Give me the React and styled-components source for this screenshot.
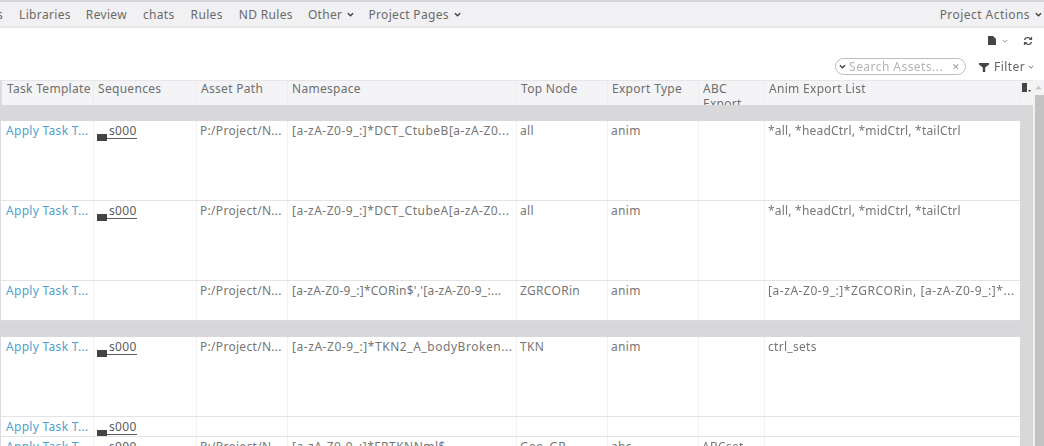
import React from "react";
import styled, { createGlobalStyle } from "styled-components";

const Global = createGlobalStyle`
  html, body { margin: 0; padding: 0; background: #fff; }
  body { font-family: "Noto Sans", "Open Sans", sans-serif; font-size: 12px; color: #666; }
`;

const Page = styled.div`
  width: 1044px;
  height: 446px;
  overflow: hidden;
  display: flex;
  flex-direction: column;
  filter: blur(0.4px);
`;

const Nav = styled.nav`
  height: 28px;
  flex: none;
  box-sizing: border-box;
  border-top: 2px solid #d6d6d8;
  border-bottom: 2px solid #e6e6e8;
  background: #f1f1f3;
  display: flex;
  align-items: center;
  overflow: hidden;
`;

const NavItem = styled.span`
  font-size: 12px;
  color: #6a6a6a;
  white-space: nowrap;
  margin-left: ${(p) => p.$gap}px;
  letter-spacing: 0.33px;
  display: inline-flex;
  align-items: center;
  gap: 5px;
`;

const NavEnd = styled(NavItem)`
  margin-right: 2px;
  letter-spacing: 0.45px;
`;

const NavSpacer = styled.span`
  flex: 1;
`;

const Chevron = ({ size = 7, color = "#444", w = 1.6 }) => (
  <svg width={size} height={size} viewBox="0 0 8 8" fill="none">
    <path d="M1 2.5 4 5.5 7 2.5" stroke={color} strokeWidth={w} />
  </svg>
);

const IconRow = styled.div`
  height: 25px;
  flex: none;
  display: flex;
  justify-content: flex-end;
  align-items: center;
  gap: 15px;
  padding: 0 11px 0 0;
  box-sizing: border-box;
`;

const DocGroup = styled.span`
  display: inline-flex;
  align-items: center;
  gap: 6px;
`;

const FilterRow = styled.div`
  height: 27px;
  flex: none;
  display: flex;
  justify-content: flex-end;
  align-items: center;
  padding: 0 10px 0 0;
  box-sizing: border-box;
`;

const Search = styled.div`
  width: 131px;
  height: 17px;
  box-sizing: border-box;
  border: 1px solid #bcbcbc;
  border-radius: 9px;
  display: flex;
  align-items: center;
  padding: 0 5px 0 3px;
  gap: 3px;
  margin-right: 13px;
`;

const SearchText = styled.span`
  flex: 1;
  color: #b4b4b4;
  font-size: 12px;
  letter-spacing: 0.45px;
  white-space: nowrap;
`;

const Clear = styled.span`
  color: #999;
  font-size: 9px;
`;

const Filter = styled.span`
  display: inline-flex;
  align-items: center;
  gap: 5px;
  color: #666;
  font-size: 12px;
  letter-spacing: 0.4px;
`;

const FilterChevron = styled.span`
  display: inline-flex;
  margin-left: -2px;
`;

const Body = styled.div`
  flex: 1;
  min-height: 0;
  display: flex;
  overflow: hidden;
`;

const TableWrap = styled.div`
  width: 1033px;
  flex: none;
  background: #d8d8da;
  overflow: hidden;
`;

const Cols = "103px 91px 229px 91px 91px 66px 256px";

const HeaderRow = styled.div`
  height: 25px;
  display: grid;
  grid-template-columns: 91px ${Cols} 13px;
  background: #f4f4f6;
  border-top: 1px solid #e6e6e8;
  box-sizing: border-box;
  border-left: 2px solid #dcdcde;
  overflow: hidden;
`;

const HeaderCell = styled.div`
  box-sizing: border-box;
  padding-left: ${(p) => p.$pad ?? 4}px;
  border-left: ${(p) => (p.$first ? "none" : "1px solid #ececee")};
  font-size: 12px;
  line-height: 15px;
  color: #6e6e6e;
  letter-spacing: 0.3px;
  white-space: ${(p) => (p.$wrap ? "normal" : "nowrap")};
  overflow: hidden;
`;

const Band = styled.div`
  height: 16px;
  background: #d8d8da;
`;

const Row = styled.div`
  width: 1020px;
  height: ${(p) => p.$h}px;
  box-sizing: border-box;
  display: grid;
  grid-template-columns: 92px ${Cols};
  background: #fff;
  border-left: 1px solid #dcdcde;
  border-bottom: 1px solid ${(p) => (p.$last ? "#dcdcde" : "#e4e4e6")};
  overflow: hidden;
`;

const Cell = styled.div`
  box-sizing: border-box;
  padding: ${(p) => p.$top ?? 2}px 0 0 ${(p) => p.$pad ?? 3}px;
  border-left: ${(p) => (p.$first ? "none" : "1px solid #f2f2f3")};
  font-size: 12px;
  line-height: 16px;
  color: #767676;
  letter-spacing: ${(p) => p.$ls ?? 0.3}px;
  white-space: nowrap;
  overflow: hidden;
`;

const TaskLink = styled.span`
  color: #4f9fd0;
`;

const SeqLink = styled.span`
  display: inline-flex;
  align-items: flex-end;
  line-height: 14px;
`;

const SeqText = styled.span`
  color: #5c5c5c;
  border-bottom: 1px solid #5c5c5c;
  padding-left: 2px;
`;

const SeqBox = styled.span`
  display: inline-block;
  width: 10px;
  height: 7px;
  margin-bottom: -2px;
  background: #444;
`;

const Scrollbar = styled.div`
  width: 11px;
  flex: none;
  background: #f0f0f0;
  display: flex;
  flex-direction: column;
  align-items: flex-end;
`;

const ScrollUp = styled.div`
  height: 15px;
  width: 100%;
  display: flex;
  justify-content: center;
  align-items: center;
  background: #f4f4f6;
`;

const ScrollThumb = styled.div`
  flex: 1;
  width: 9px;
  background: #c2c2c2;
`;

const head = [
  "Task Template",
  "Sequences",
  "Asset Path",
  "Namespace",
  "Top Node",
  "Export Type",
  "ABC Export",
  "Anim Export List",
];

const rows = [
  { h: 80, seq: true, path: "P:/Project/N...", ns: "[a-zA-Z0-9_:]*DCT_CtubeB[a-zA-Z0...", nsLs: 0.5, top: "all", type: "anim", abc: "", list: "*all, *headCtrl, *midCtrl, *tailCtrl", listLs: 0.2 },
  { h: 80, seq: true, path: "P:/Project/N...", ns: "[a-zA-Z0-9_:]*DCT_CtubeA[a-zA-Z0...", nsLs: 0.5, top: "all", type: "anim", abc: "", list: "*all, *headCtrl, *midCtrl, *tailCtrl", listLs: 0.2 },
  { h: 40, last: true, seq: false, path: "P:/Project/N...", ns: "[a-zA-Z0-9_:]*CORin$','[a-zA-Z0-9_:...", nsLs: 0.25, top: "ZGRCORin", type: "anim", abc: "", list: "[a-zA-Z0-9_:]*ZGRCORin, [a-zA-Z0-9_:]*...", listLs: 0.55 },
  { band: true, h: 80, seq: true, path: "P:/Project/N...", ns: "[a-zA-Z0-9_:]*TKN2_A_bodyBroken...", nsLs: 0.55, top: "TKN", type: "anim", abc: "", list: "ctrl_sets" },
  { h: 20, seq: true, path: "", ns: "", top: "", type: "", abc: "", list: "" },
  { h: 20, seq: true, path: "P:/Project/N...", ns: "[a-zA-Z0-9_:]*FRTKNNml$", nsLs: 0.5, top: "Geo_GR", type: "abc", abc: "ABCset", list: "" },
];

function Seq() {
  return (
    <SeqLink>
      <SeqBox />
      <SeqText>s000</SeqText>
    </SeqLink>
  );
}

export default function App() {
  return (
    <Page>
      <Global />
      <Nav>
        <NavItem $gap={-3}>s</NavItem>
        <NavItem $gap={16}>Libraries</NavItem>
        <NavItem $gap={15}>Review</NavItem>
        <NavItem $gap={16}>chats</NavItem>
        <NavItem $gap={16}>Rules</NavItem>
        <NavItem $gap={16}>ND Rules</NavItem>
        <NavItem $gap={15}>Other <Chevron /></NavItem>
        <NavItem $gap={14}>Project Pages <Chevron /></NavItem>
        <NavSpacer />
        <NavEnd $gap={0}>Project Actions <Chevron /></NavEnd>
      </Nav>
      <IconRow>
        <DocGroup>
          <svg width="8" height="9" viewBox="0 0 8 9"><path d="M0 0H5L8 3V9H0Z" fill="#444" /></svg>
          <Chevron size={6} color="#888" w={1.2} />
        </DocGroup>
        <svg width="10" height="10" viewBox="0 0 10 10" fill="none" stroke="#555" strokeWidth="1.3">
          <path d="M1.5 4C2 2 4 1.2 6 1.8L8 3M8.5 1V3.3H6.2" />
          <path d="M8.5 6C8 8 6 8.8 4 8.2L2 7M1.5 9V6.7H3.8" />
        </svg>
      </IconRow>
      <FilterRow>
        <Search>
          <Chevron size={7} />
          <SearchText>Search Assets...</SearchText>
          <Clear>✕</Clear>
        </Search>
        <Filter>
          <svg width="10" height="10" viewBox="0 0 10 10"><path d="M0 1H10V2.5L6.2 5.5V10H3.8V5.5L0 2.5Z" fill="#444" /></svg>
          Filter
          <FilterChevron><Chevron size={6} color="#666" w={1.2} /></FilterChevron>
        </Filter>
      </FilterRow>
      <Body>
        <TableWrap>
          <HeaderRow>
            {head.map((h, i) => (
              <HeaderCell key={h} $first={i === 0} $wrap={h === "ABC Export"} $pad={i === 0 ? 5 : 4}>{h}</HeaderCell>
            ))}
            <HeaderCell $pad={1}>
              <svg width="10" height="10" viewBox="0 0 10 10"><path d="M0 0H5V9H0Z" fill="#444" /><path d="M6 7H9L7.5 9Z" fill="#444" /></svg>
            </HeaderCell>
          </HeaderRow>
          {rows.map((r, i) => (
            <React.Fragment key={i}>
              {(i === 0 || r.band) && <Band />}
              <Row $h={r.h} $last={r.last}>
                <Cell $first $pad={5}><TaskLink>Apply Task T...</TaskLink></Cell>
                <Cell $pad={3} $top={3}>{r.seq ? <Seq /> : ""}</Cell>
                <Cell>{r.path}</Cell>
                <Cell $ls={r.nsLs} $pad={4}>{r.ns}</Cell>
                <Cell>{r.top}</Cell>
                <Cell>{r.type}</Cell>
                <Cell>{r.abc}</Cell>
                <Cell $ls={r.listLs}>{r.list}</Cell>
              </Row>
            </React.Fragment>
          ))}
        </TableWrap>
        <Scrollbar>
          <ScrollUp>
            <svg width="7" height="5" viewBox="0 0 7 5"><path d="M0 4.5 3.5 0.5 7 4.5Z" fill="#ccc" /></svg>
          </ScrollUp>
          <ScrollThumb />
        </Scrollbar>
      </Body>
    </Page>
  );
}
